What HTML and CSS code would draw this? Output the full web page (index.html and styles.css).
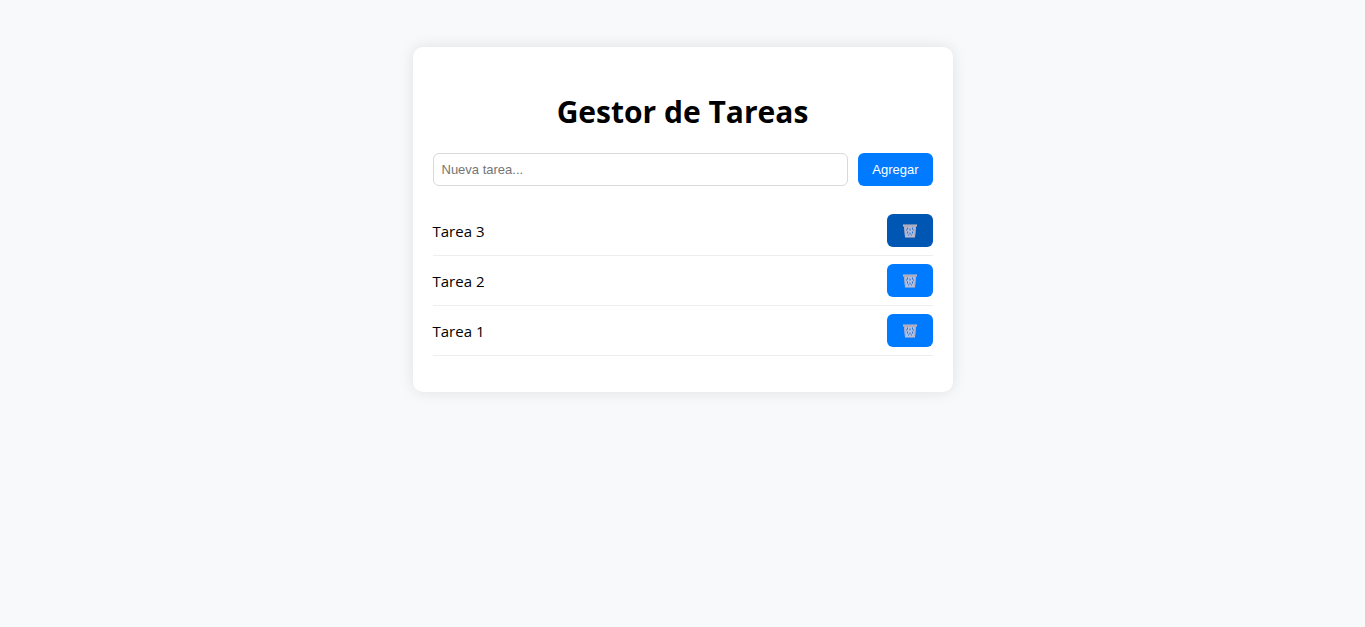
FILE: index.html
```html
<!DOCTYPE html>
<html lang="es">
<head>
  <meta charset="utf-8">
  <meta name="viewport" content="width=device-width, initial-scale=1">
  <title>Gestor de Tareas</title>
  <link rel="stylesheet" href="styles.css">
</head>
<body>
  <svg class="sprite" aria-hidden="true">
    <symbol id="trash" viewBox="0 0 14 14">
      <path d="M1 2h12l-1 11.5H2z" fill="#d0cbdc" fill-opacity=".85"/>
      <path d="M4 4h1v2H4zM9 4h1v2H9zM6.500 5h1v2h-1zM4 8h1v2H4zM9 8h1v2H9zM6.500 9h1v2h-1zM3 6h1v1H3zM10 6h1v1h-1zM5 11h1v1H5zM8 11h1v1H8z" fill="#2470d8"/>
      <path d="M1.500 3l1 10M12.500 3l-1 10" fill="none" stroke="#b3a9b5"/>
      <path d="M0 1h14v2H0z" fill="#c6bbc2"/>
      <path d="M1 2h12v1H1z" fill="#a39cad"/>
      <path d="M2 13h10v1H2z" fill="#c6bbc2"/>
    </symbol>
  </svg>
  <main class="card">
    <h1 class="title">Gestor de Tareas</h1>
    <form class="task-form">
      <input class="task-input" type="text" placeholder="Nueva tarea..." aria-label="Nueva tarea">
      <button class="btn" type="button">Agregar</button>
    </form>
    <ul class="task-list">
      <li class="task"><span>Tarea 3</span><button class="btn btn-delete btn-active" type="button" aria-label="Eliminar Tarea 3"><svg class="icon"><use href="#trash"/></svg></button></li>
      <li class="task"><span>Tarea 2</span><button class="btn btn-delete" type="button" aria-label="Eliminar Tarea 2"><svg class="icon"><use href="#trash"/></svg></button></li>
      <li class="task"><span>Tarea 1</span><button class="btn btn-delete" type="button" aria-label="Eliminar Tarea 1"><svg class="icon"><use href="#trash"/></svg></button></li>
    </ul>
  </main>
</body>
</html>
```

FILE: styles.css
```css
* {
  box-sizing: border-box;
}

body {
  margin: 0;
  padding: 47px 20px;
  background: #f8f9fb;
  color: #000;
  font-family: "Segoe UI", "Open Sans", sans-serif;
  font-size: 15px;
}

.sprite {
  display: none;
}

.card {
  max-width: 540px;
  margin: 0 auto;
  padding: 20px;
  background: #fff;
  border-radius: 10px;
  box-shadow: 0 0 15px rgba(0, 0, 0, 0.1);
}

.title {
  margin: 24px 0 20px;
  font-size: 30px;
  font-weight: 700;
  line-height: 42px;
  text-align: center;
}

.task-form {
  display: flex;
  gap: 10px;
  margin-bottom: 20px;
}

.task-input {
  flex: 1;
  min-width: 0;
  height: 33px;
  padding: 8px;
  border: 1px solid #d9d9d9;
  border-radius: 6px;
  font: 13px "Liberation Sans", sans-serif;
}

.task-input::placeholder {
  color: #757575;
}

.btn {
  display: flex;
  align-items: center;
  justify-content: center;
  height: 33px;
  padding: 0 14px;
  border: 0;
  border-radius: 6px;
  background: #007bff;
  color: #fff;
  font: 13px "Liberation Sans", sans-serif;
  cursor: pointer;
}

.btn-delete {
  padding: 0 16px;
}

.btn:hover,
.btn-active {
  background: #0056b3;
}

.icon {
  width: 14px;
  height: 15px;
}

.task-list {
  margin: 0 0 16px;
  padding: 0;
  list-style: none;
}

.task {
  display: flex;
  align-items: center;
  justify-content: space-between;
  padding: 8px 0;
  border-bottom: 1px solid #eee;
}
```
